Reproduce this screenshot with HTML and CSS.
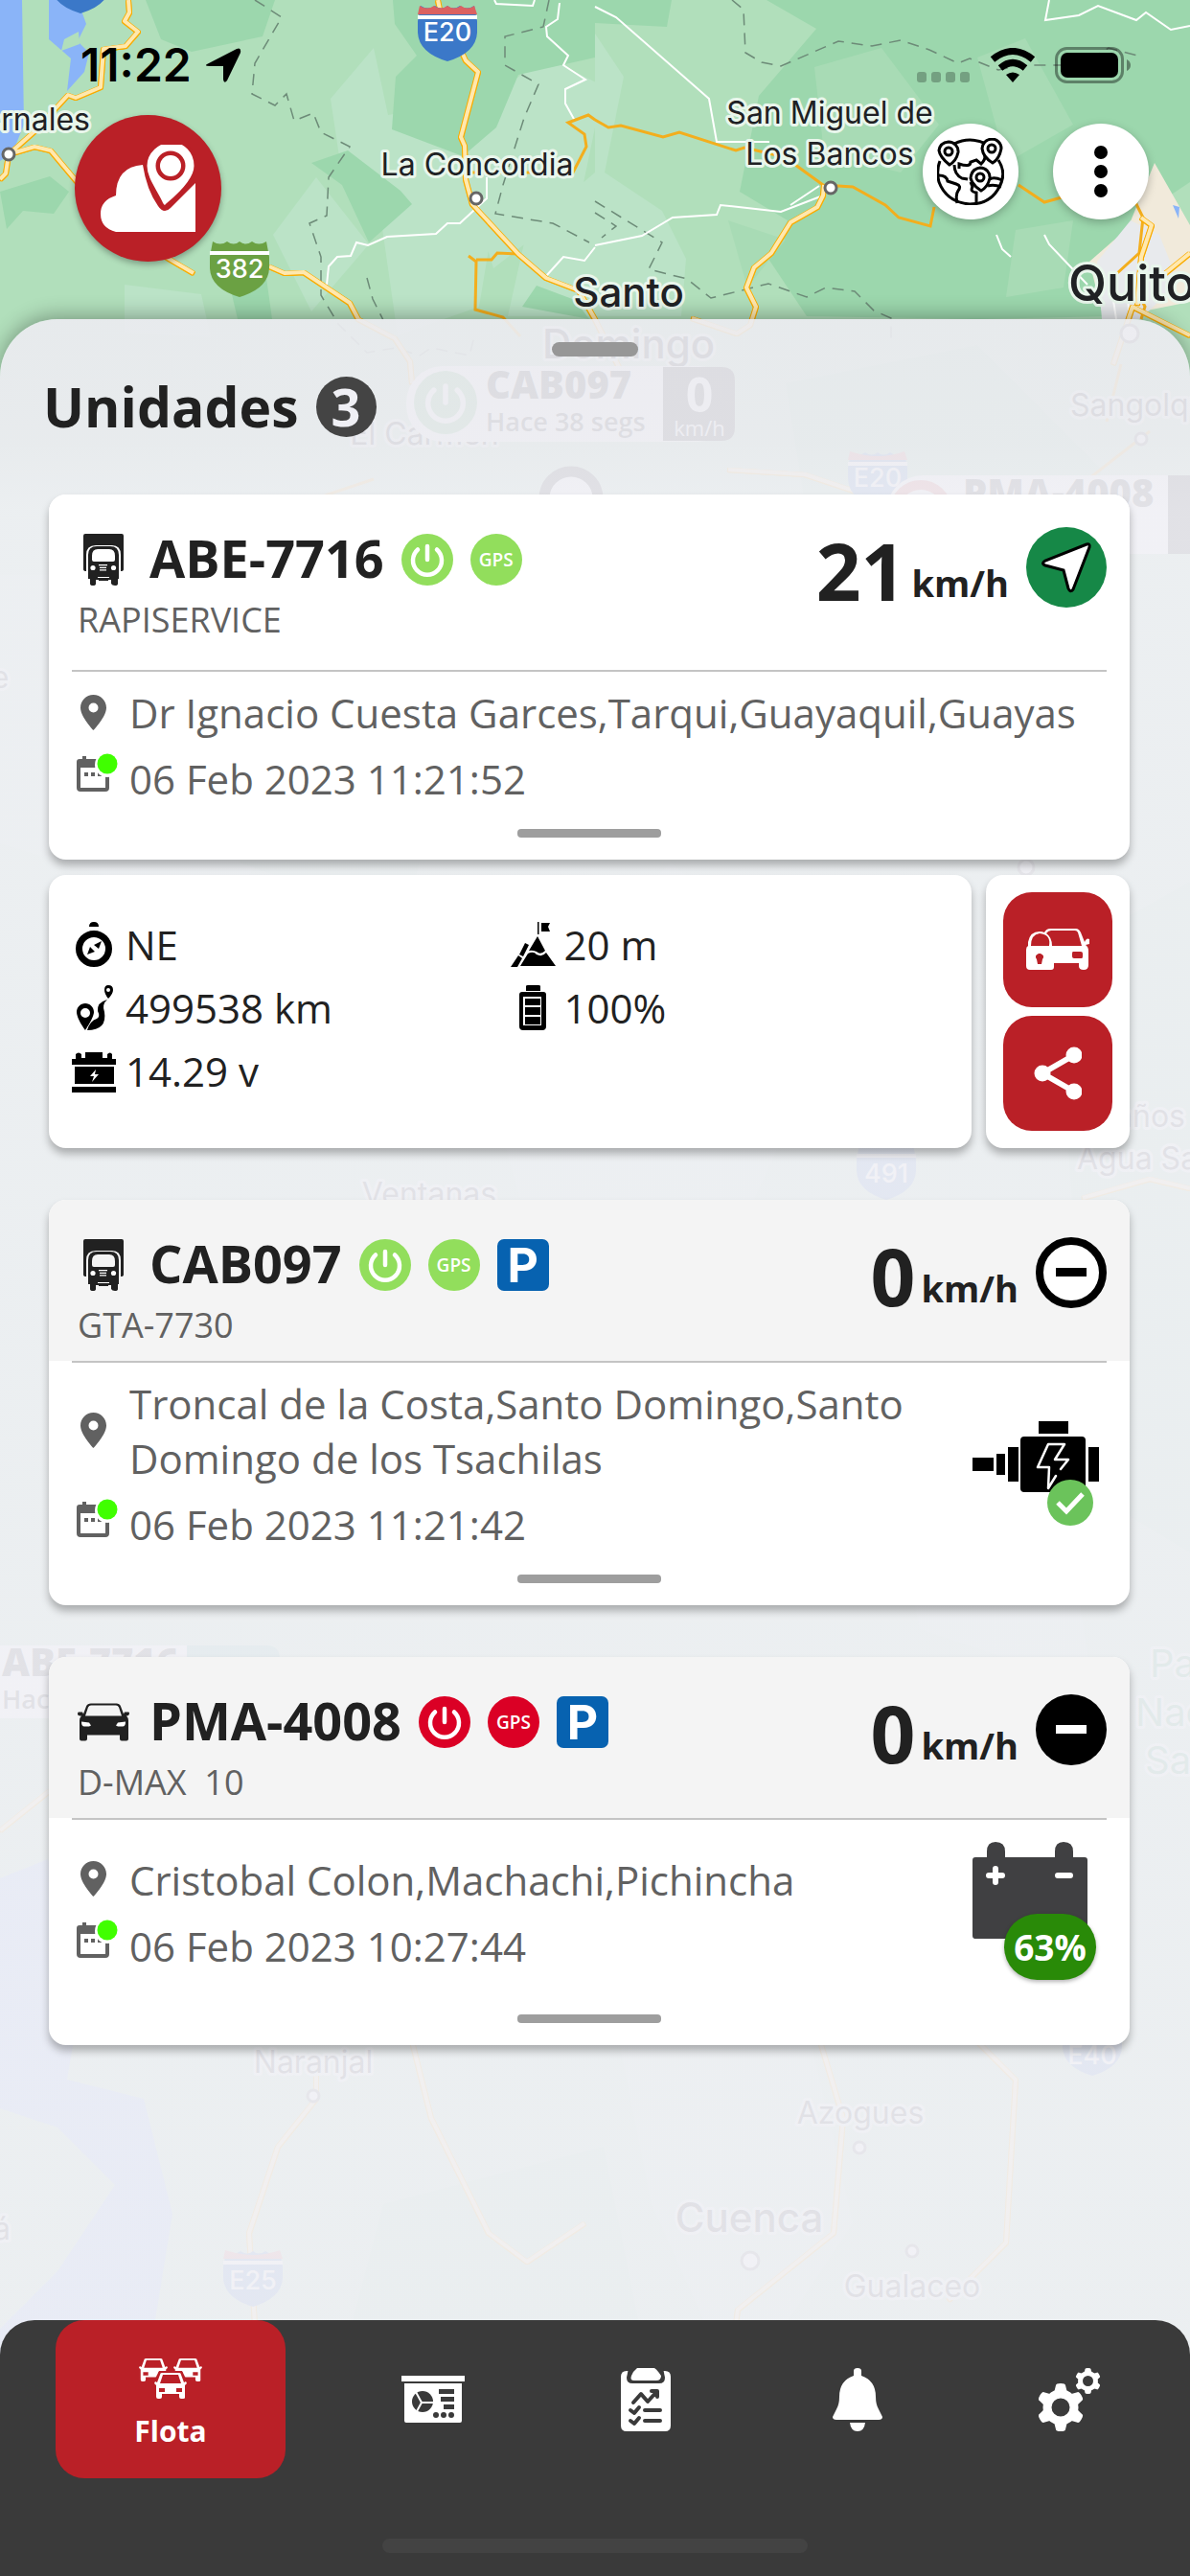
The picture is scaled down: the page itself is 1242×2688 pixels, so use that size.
FILE: index.html
```html
<!DOCTYPE html>
<html lang="es">
<head>
    <meta charset="UTF-8">
    <meta name="viewport" content="width=device-width, initial-scale=1">
    <title>Unidades</title>
    <link rel="stylesheet" href="styles.css">
</head>
<body>
    <!-- shared icons -->
    <svg class="icon-defs" aria-hidden="true">
        <symbol id="i-truck" viewBox="0 0 42 54">
            <path fill="currentColor" d="M2 0h38q2 0 2 2v35q0 2-3 2V22q0-10-9-10H13q-10 0-10 10v17q-3 0-3-2V2q0-2 2-2z"/>
            <path fill="currentColor" fill-rule="evenodd" d="M14 13h14q9 0 9 9v25h-1v5q0 2-3 2t-4-2v-4h-3v1H16v-1h-3v4q0 2-3 2t-3-2v-5H5V22q0-9 9-9zm1 3q-6 0-6 7v4q0 2 2 2h20q2 0 2-2v-4q0-7-6-7z"/>
            <g fill="#fff"><circle cx="10" cy="35.500" r="2.600"/><circle cx="31.500" cy="35.500" r="2.600"/><path d="M16 32h9v1.300h-9zM17 34.700h7v1.300h-7zM17 37.200h7v1.300h-7zM15 45h12v1H15z"/></g>
        </symbol>
        <symbol id="i-car" viewBox="0 0 54 39">
            <path fill="currentColor" fill-rule="evenodd" d="M14 0h27q3 0 4 3l3 8 1-2h4q1 0 1 1 0 3-3 3 2 2 2 5v19q0 2-2 2h-5q-2 0-2-2v-4H10v4q0 2-2 2H4q-2 0-2-2V18q0-3 2-5-4 0-4-2 0-2 1-2h4l1 2 3-8q1-3 5-3zm0 2q-2 0-3 2L8 13h38l-3-9q-1-2-3-2z"/>
            <path fill="#fff" d="M4 19l8 1 2 3-2 1H7q-3 0-3-5zm46 0l-8 1-2 3 2 1h5q3 0 3-5z"/>
        </symbol>
        <symbol id="i-power" viewBox="0 0 54 54">
            <circle cx="27" cy="27" r="27" fill="currentColor"/>
            <path d="M27 13v14M17 16.500a15 15 0 1 0 20 0" fill="none" stroke="#fff" stroke-width="4.500" stroke-linecap="round"/>
        </symbol>
        <symbol id="i-pin" viewBox="0 0 48 54">
            <path fill="currentColor" fill-rule="evenodd" d="M22.500 8C15 8 9 14 9 21.500 9 31 22.500 45 22.500 45S36 31 36 21.500C36 14 30 8 22.500 8zm0 8.500a5 5 0 1 1 0 10 5 5 0 0 1 0-10z"/>
        </symbol>
        <symbol id="i-date" viewBox="0 0 48 54">
            <path fill="currentColor" fill-rule="evenodd" d="M8 6h3V3h4v3h20q4 0 4 4v26q0 4-4 4H9q-4 0-4-4V9q0-3 3-3zm1 9v21h26V15z"/>
            <path fill="currentColor" d="M13 20h4v4h-4zM20 20h4v4h-4zM27 20h4v4h-4z"/>
            <circle cx="37" cy="12" r="13" fill="#fff"/><circle cx="37" cy="11" r="10.500" fill="#40ff00"/>
        </symbol>
        <symbol id="i-minicar" viewBox="0 0 34 27">
            <path fill="#fff" fill-rule="evenodd" d="M8 0h18q2 0 2 2l3 8 2-1 1 2-2 2v13q0 1-2 1h-2q-2 0-2-2v-3H8v3q0 2-2 2H4q-2 0-2-2V13l-2-2 1-2 2 1 3-8q0-2 2-2zm1 2L6 11h22l-3-9zM5 16v4h6v-4zm18 0v4h6v-4z"/>
        </symbol>
        <symbol id="i-shield" viewBox="0 0 64 62">
            <path fill="currentColor" d="M4 4q8 5 15 0 7 5 13 0 6 5 13 0 7 5 15 0l3 16v12Q62 53 32 62 2 53 1 32V20z"/>
            <path fill="#fff" d="M1 14h62v4H1z"/>
        </symbol>
    </svg>

    <svg class="map" viewBox="0 0 1242 2688" preserveAspectRatio="xMidYMin slice" aria-hidden="true">
        <rect width="1242" height="2688" fill="#b1dfbb"/>
        <!-- land -->
        <g fill="#bbe3c7">
            <path d="M345 103l45-53 15 70 55-10 60 90-20 120-85 30-20-140-40-40zM285 245l45-60 55 70-60 70zM130 297l80 10 10 45-90-5zM621 35l30 45-20 100 60 40 25 50-5 60H530l20-90 71-60zM990 20l40 15-15 60zM470 130l100-70 60 30-25 120-90 70z"/>
            <path d="M0 600h300l90 150-160 200L0 880zM500 1100l200-200 180 150-120 260H560zM640 2100l190-40 60 260-120 180-90-200zM900 1400l180-40 60 400-180-60z"/>
        </g>
        <g fill="#9cd7ad">
            <path d="M152 0h135l-13 38-74 16-32-13zM410 0h211v60l-80 18-23 55-35 30-74-28 4-55 22-22-23-33zM325 170l38-13 55 42 12 14-45 40-28-60zM0 200l52-16 20 16-16 23-32-3-17 19zM621 0h80l-5 28-75-4zM800 0h442v190l-60 40-20 100-140 3-180-3-40-60 20-40-50-30 20-100 60-70zM238 290h40l6 43h-36zM545 320l15-22 40 15 15 20z"/>
            <path d="M820 400l200-40 130 130-90 220-200-60zM1100 1000l142-80v700l-100-60zM300 700l180 60-60 200-170-60zM400 2300l230-60 60 300-240 148-110-160z"/>
        </g>
        <path d="M850 70l70-20 60 80-40 50-80-20zM1020 60l50-20 50 90-70 40zM1060 240l60-10-10 70-60 10zM760 230l60 20-40 50z" fill="#a8dbb5"/>
        <path d="M1205 170l37 65v80l-90 18-15-60 40-35z" fill="#f1eadb"/>
        <path d="M1180 230l30 15 20 50-40 38h-40l-5-60z" fill="#e8eaed"/>
        <path d="M0 0h23l2 130-12 30-13 8zM51 0h30l9 25-9 18 12 12-5 20-18 20 4-34-23-20zM1224 214l7 2-1 12zM0 1960l50-20 40 110-20 120 80 20 30 120-60 370H0z" fill="#8ab4f8"/>
        <path d="M82 33l-15 8-3 12 19-7zM0 2200l60 20 60 60-60 90-60 60z" fill="#b1dfbb"/>
        <!-- boundaries -->
        <g class="border">
            <path d="M266 0l28 18-28 48-3 32 24 12 12-12 8 28 20-8 8 20 30 15-22 32-2 40-18 8 12 35v40l18 30 30 30 30-5 25 8 12-8 40 8 5-20M383 290l6 22 11 22M573 0l-6 28-40 10v30l35 20-15 35-22 70-8 30 60 10 38 20M621 222l22 14-15 12M764 0l12 10 2 45 17 10 20 4 60-26 35 5 30-6 30 10 30 14 12-5 30 12 25-5h60l30-18 30 8M621 210l70 43-14 28 40 10 25 20 60-15 40 14 20-10 30 4 20 20 18 8v22"/>
        </g>
        <!-- minor roads -->
        <g class="lane">
            <path d="M621 7l22 11 97 85 8 45 55 0M621 256l49-10 32-19 46-3 4-10 63 7 44-17M341 297l2-19 9-10 14-1 6-14 12 3 20-9 51-3 12-11h13l28-26v-22M570 288l18-20 22 4 11-14M516 0l2 4 38 2 2-6M584 3l-2 17-12 8 1 10 22 20-5 10 23 15-21 10v15l10 18M1040 245l6 15 9 8M1090 245l5 10 40 42M1095 0l-4 21 35-5 20-10 40 15 10-8 26 18 20-4M825 214l30-20M1160 300l5 33M1175 290l4 43"/>
        </g>
        <g class="road-thin">
            <path d="M621 125l14 8 13-2 44 12 17-5 59 19 9-3 42 10 40 29 31 2 34 19 14 13 33 9 4-20M1063 193l27 18 18-5M1185 211l8 16-4 37-24 22M621 125l-7-5-21 8 17 12 2 13-14 27H487M489 267l8 6-1 50 29 8 18 20M497 271l16 0 6-7 22 1M1185 300l10 20-4 13M390 500l-60 20-40 60M1170 380l-15 60M1110 520l90-70"/>
        </g>
        <g class="road">
            <path d="M134 0l1 13-5 9 14 11-13 15-23 3-3 40-26 11-8-3-35 38-27 24 27-8 17 4 26 31 60 60 63 37M9 161l-3 20-6 6M281 278l16 7 20-1 48 32 9 17 38 20 16 24 2 23M457 0l2 10M481 52l5 11 13 12-18 68 4 9 1 35 7 26 48 52 29 25 34 13 17 30 30 60M860 193l-1 11-6 12-28 16-20 32-18 15-8 21 10 20-6 19-14 9-47-16M1191 227l11 8-11 33-4 50M1242 264l-27 22M1242 350l-60-30-20 60M760 490l80 5 60 20M330 2160v30l-40 50-30 90 10 160M430 2130l20 80 60 120 40 30 60-40M850 2110l30 100-10 120-100 80-20 150M1020 2130l40 40-10 170-60 60M120 1850l-70 20-50 40M1130 1250l70-20 42 10"/>
        </g>
        <g class="town">
            <circle cx="9" cy="161" r="6"/><circle cx="497" cy="207" r="6"/><circle cx="867" cy="196" r="6"/><circle cx="1179" cy="348" r="9"/><circle cx="1191" cy="458" r="6"/><circle cx="327" cy="2187" r="6"/><circle cx="897" cy="2241" r="6"/><circle cx="783" cy="2359" r="9"/><circle cx="952" cy="2349" r="6"/><circle cx="1071" cy="905" r="8"/>
        </g>
        <!-- place names -->
        <g class="place">
            <text x="94" y="136" text-anchor="end">Pedernales</text>
            <text x="498" y="183">La Concordia</text>
            <text x="866" y="129">San Miguel de</text>
            <text x="866" y="172">Los Bancos</text>
            <text x="443" y="464">El Carmen</text>
            <text x="1117" y="434" text-anchor="start">Sangolquí</text>
            <text x="448" y="1257">Ventanas</text>
            <text x="1237" y="1176" text-anchor="end">Baños</text>
            <text x="1124" y="1220" text-anchor="start">Agua Santa</text>
            <text x="327" y="2163">Naranjal</text>
            <text x="898" y="2216">Azogues</text>
            <text x="952" y="2397">Gualaceo</text>
            <text x="0" y="718">e</text>
            <text x="2" y="2337">á</text>
        </g>
        <g class="place park">
            <text x="1200" y="1750" text-anchor="start">Parque</text>
            <text x="1185" y="1801" text-anchor="start">Nacional</text>
            <text x="1195" y="1851" text-anchor="start">Sangay</text>
        </g>
        <g class="place city">
            <text x="656" y="320">Santo</text>
            <text x="656" y="374">Domingo</text>
            <text x="782" y="2329">Cuenca</text>
        </g>
        <text class="place capital" x="1115" y="314">Quito</text>
        <!-- road shields -->
        <g class="shield">
            <use href="#i-shield" x="52" y="-48" width="64" height="62" color="#3b78c8"/>
            <use href="#i-shield" x="435" y="2" width="64" height="62" color="#3b78c8"/>
            <path d="M438 6q8 5 15 0 7 5 14 0 7 5 14 0 7 5 14 0l3 9h-62z" fill="#db6161"/>
            <text x="467" y="43">E20</text>
            <use href="#i-shield" x="218" y="248" width="64" height="62" color="#6ba143"/>
            <text x="250" y="290">382</text>
            <use href="#i-shield" x="884" y="468" width="64" height="62" color="#3b78c8"/>
            <path d="M887 471q30 10 57 0l3 9h-62z" fill="#db6161"/>
            <text x="916" y="508">E20</text>
            <use href="#i-shield" x="893" y="1190" width="64" height="62" color="#3b78c8"/>
            <text x="925" y="1234">491</text>
            <use href="#i-shield" x="232" y="2345" width="64" height="62" color="#3b78c8"/>
            <path d="M235 2348q30 10 57 0l3 9h-62z" fill="#db6161"/>
            <text x="264" y="2389">E25</text>
            <use href="#i-shield" x="1108" y="2104" width="64" height="62" color="#3b78c8"/>
            <text x="1140" y="2154">E40</text>
        </g>
        <!-- vehicle markers -->
        <g class="marker">
            <rect x="424" y="382" width="343" height="79" rx="38" fill="#fff"/>
            <path d="M692 383h61q14 0 14 14v49q0 14-14 14h-61z" fill="#222"/>
            <use href="#i-power" x="432" y="387" width="66" height="66" color="#5fb56d"/>
            <text class="plate" x="507" y="416">CAB097</text>
            <text class="ago" x="507" y="450">Hace 38 segs</text>
            <text class="kmh" x="730" y="430">0</text>
            <text class="unit" x="730" y="455">km/h</text>
            <circle cx="596" cy="520" r="28" fill="#fff" stroke="#222" stroke-width="11"/>
            <rect x="925" y="496" width="330" height="82" rx="38" fill="#fff"/>
            <circle cx="961" cy="534" r="28" fill="#fff" stroke="#dd4b4b" stroke-width="10"/>
            <text class="plate" x="1005" y="529">PMA-4008</text>
            <path fill="#222" d="M1219 496h23v82h-23z"/>
            <path fill="#fff" d="M0 1717h200v76H0z"/>
            <path fill="#5fb5a0" d="M195 1717h83q14 0 14 14v62h-97z"/>
            <text class="plate" x="2" y="1749">ABE-7716</text>
            <text class="ago" x="2" y="1783">Hace 28 segs</text>
        </g>
    </svg>

    <div class="screen">
        <div class="status-bar">
            <div class="status-left">
                <span class="time">11:22</span>
                <svg width="38" height="38" viewBox="0 0 38 38" aria-hidden="true"><path d="M2 18L33 2q5-2 4 4L23 35q-3 4-4-1V20H5q-6 0-3-2z"/></svg>
            </div>
            <div class="status-right">
                <svg class="cell" width="56" height="11" viewBox="0 0 56 11" aria-hidden="true"><g fill="#000" opacity=".25"><rect width="10" height="11" rx="3"/><rect x="15" width="10" height="11" rx="3"/><rect x="30" width="10" height="11" rx="3"/><rect x="45" width="10" height="11" rx="3"/></g></svg>
                <svg width="48" height="36" viewBox="0 0 48 36" aria-hidden="true"><g fill="none" stroke="#000" stroke-width="7"><path d="M3 12q21-17 42 0"/><path d="M11 21q13-11 26 0"/></g><path d="M24 36l-7-8q7-5 14 0z"/></svg>
                <svg width="80" height="38" viewBox="0 0 80 38" aria-hidden="true"><rect x="1.500" y="1.500" width="69" height="35" rx="11" fill="none" stroke="#000" stroke-opacity=".4" stroke-width="3"/><rect x="6" y="6" width="60" height="26" rx="7"/><path d="M75 13q4 2 4 6t-4 6z" fill-opacity=".4"/></svg>
            </div>
        </div>

        <header class="toolbar">
            <button class="logo" aria-label="Inicio">
                <svg width="100" height="92" viewBox="0 0 100 92"><path fill="#fff" d="M16 91q-16-4-16-19 0-14 16-19 0-30 28-32 4 26 16 43 6 9 13 2l26-26v51z"/><path fill="#fff" fill-rule="evenodd" stroke="#ba2027" stroke-width="3" d="M74-4c14 0 25 11 25 26 0 17-23 35-30 41q-3 3-5-1C58 48 47 36 47 22 47 8 60-4 74-4zm-1 12a14 14 0 1 0 0 28 14 14 0 0 0 0-28z"/><circle cx="73" cy="22" r="11" fill="#fff"/></svg>
            </button>
            <button class="round map-type" aria-label="Rutas">
                <svg width="70" height="70" viewBox="0 0 70 70" fill="none" stroke="#000" stroke-width="3"><path d="M18 6q16-8 33 0M64 23q9 14 1 28-9 18-31 18Q10 67 2 46-1 34 3 24"/><path d="M2 39q8 0 9 6l9 3q6 2 2 7-3 4-1 13M68 44q-9-4-13-1M67 51q-8-3-14-1M41 68V57q-7-1-4-6l-2-5M18 28q0 10 8 14l6 1M23 32v-5q12 4 12-2l6-2 5 4q6-6 3-11"/><path fill="#fff" d="M12 4a10 10 0 0 1 10 11q-2 9-9 13Q3 20 2 13 3 5 12 4zM57 1a10 10 0 0 1 10 10q-2 11-9 15-10-6-11-15Q48 2 57 1zM45 31a10 10 0 0 1 10 11q-2 9-9 13-9-6-11-13 1-10 10-11z"/><circle cx="12" cy="14" r="4"/><circle cx="57" cy="11" r="4"/><circle cx="45" cy="41" r="4"/></svg>
            </button>
            <button class="round menu" aria-label="Menú">
                <svg width="14" height="54" viewBox="0 0 14 54"><circle cx="7" cy="7" r="7"/><circle cx="7" cy="27" r="7"/><circle cx="7" cy="47" r="7"/></svg>
            </button>
        </header>

        <main class="sheet">
            <button class="sheet-handle" aria-label="Ocultar lista"></button>
            <div class="sheet-title">
                <h1>Unidades</h1>
                <span class="count">3</span>
            </div>

            <div class="units">
                <section class="unit-group">
                    <article class="card">
                        <div class="card-head open">
                            <div class="vehicle">
                                <div class="vehicle-row">
                                    <svg class="kind"><use href="#i-truck"/></svg>
                                    <h2>ABE-7716</h2>
                                    <svg class="state on"><use href="#i-power"/></svg>
                                    <span class="state gps on">GPS</span>
                                </div>
                                <p class="alias">RAPISERVICE</p>
                            </div>
                            <div class="speed">
                                <p><b>21</b><span>km/h</span></p>
                                <svg width="84" height="84" viewBox="0 0 84 84"><circle cx="42" cy="42" r="42" fill="#168847"/><path d="M63 18q4-1 3 3L49 65q-3 4-5-1l-5-19-19-5q-5-2 0-5z" fill="#fff" stroke="#000" stroke-width="3"/></svg>
                            </div>
                        </div>
                        <div class="card-body">
                            <div class="info">
                                <p><svg><use href="#i-pin"/></svg><span>Dr Ignacio Cuesta Garces,Tarqui,Guayaquil,Guayas</span></p>
                                <p><svg><use href="#i-date"/></svg><span>06 Feb 2023 11:21:52</span></p>
                            </div>
                        </div>
                        <button class="card-handle" aria-label="Ver detalle"></button>
                    </article>

                    <div class="details">
                        <ul class="card readings">
                            <li><svg viewBox="0 0 48 48"><path d="M18 5q0-5 5-5t5 5z"/><circle cx="23" cy="28" r="15.500" fill="none" stroke="#000" stroke-width="7"/><path d="M31 20l-3 8-5-4zM16 34l3-8 5 5z"/></svg>NE</li>
                            <li><svg viewBox="0 0 48 48"><path d="M28 0h1.500v13H28zM32 1h9l-2 4 2 5h-9zM28 15l8 15q-5 5-9 1-5-2-8-1zM18 33q6-3 9 1 6 3 10-2l10 14H10zM15 22l4 2-6 12-4-2zM8 35l4 3-5 9H0z"/></svg>20 m</li>
                            <li><svg viewBox="0 0 48 48"><path fill-rule="evenodd" d="M14 19c5 0 9 4 9 9 0 6-9 19-9 19S5 35 5 28c0-5 4-9 9-9zm0 5a5 5 0 1 0 0 10 5 5 0 0 0 0-10zM38 0q5 0 5 5 0 4-5 9-4-5-4-9 0-5 4-5zm0 3a2 2 0 1 0 0 4 2 2 0 0 0 0-4z"/><path d="M37 15q-6 5-3 13 3 19-18 19 3-10 10-12 4-2 1-8-1-9 10-12z"/></svg>499538 km</li>
                            <li><svg viewBox="0 0 48 48"><path d="M16 1q0-1 2-1h11q2 0 2 1v5H16z"/><path fill-rule="evenodd" d="M12 7h22q3 0 3 3v33q0 4-4 4H13q-4 0-4-4V10q0-3 3-3zm1 5v30h19V12z"/><path d="M15 14h16v7H15zM15 23h16v8H15zM15 33h16v8H15z"/></svg>100%</li>
                            <li><svg viewBox="0 0 48 48"><path d="M0 11h4V6q3-3 6 0v4h4V4h18v6h5V6q3-3 5 0v5h4v6H0zM0 40h46v6H0z"/><path fill-rule="evenodd" d="M3 19h41v18H3zm22 3l-6 7h4l-2 6 7-8h-4z"/></svg>14.29 v</li>
                        </ul>
                        <div class="card actions">
                            <button aria-label="Bloquear vehículo"><svg width="66" height="44" viewBox="0 0 66 44"><path fill="#fff" fill-rule="evenodd" d="M2 18V14Q4 3 14 3q3 0 5 1 2-4 6-4h27q3 0 5 4l4 10q2-5 5-3v5l-4 1q3 2 3 6v15q0 5-5 5t-5-4v-3H29v4q0 3-3 3H4q-4 0-4-4V22q0-3 2-4zm3 0h19q2-12-10-13Q5 6 5 18zm16-13q6 4 6 13h31L54 4q-1-2-3-2H26q-3 0-5 3zM13 26q-5 2-2 6l1 5h4l1-5q3-4-2-6zm36-2q-1 0-1 2v3q0 2 2 2h8q1 0 1-2v-3q0-2-2-2z"/></svg></button>
                            <button aria-label="Compartir"><svg width="50" height="56" viewBox="0 0 50 56"><path d="M42 9L9 28l33 19" fill="none" stroke="#fff" stroke-width="6"/><circle cx="42" cy="9" r="8.500" fill="#fff"/><circle cx="9" cy="28" r="8.500" fill="#fff"/><circle cx="42" cy="47" r="8.500" fill="#fff"/></svg></button>
                        </div>
                    </div>
                </section>

                <article class="card">
                    <div class="card-head">
                        <div class="vehicle">
                            <div class="vehicle-row">
                                <svg class="kind"><use href="#i-truck"/></svg>
                                <h2>CAB097</h2>
                                <svg class="state on"><use href="#i-power"/></svg>
                                <span class="state gps on">GPS</span>
                                <span class="state parking">P</span>
                            </div>
                            <p class="alias">GTA-7730</p>
                        </div>
                        <div class="speed">
                            <p><b>0</b><span>km/h</span></p>
                            <svg width="74" height="74" viewBox="0 0 74 74"><circle cx="37" cy="37" r="33" fill="#fff" stroke="#000" stroke-width="8"/><path d="M21 32h32v9H21z"/></svg>
                        </div>
                    </div>
                    <div class="card-body">
                        <div class="info">
                            <p><svg><use href="#i-pin"/></svg><span>Troncal de la Costa,Santo Domingo,Santo Domingo de los Tsachilas</span></p>
                            <p><svg><use href="#i-date"/></svg><span>06 Feb 2023 11:21:42</span></p>
                        </div>
                        <svg class="sensor" width="132" height="130" viewBox="0 -20 132 130"><path d="M69 0h31v13H69zM0 38h22v14H0zM25 34h9v22h-9zM37 27h11v36H37zM121 27h11v36h-11z"/><rect x="50" y="16" width="68" height="58" rx="4"/><path d="M92 50l8-10H86l10-16H79L68 48h12l-1 22 8-13" fill="none" stroke="#fff" stroke-width="2.500" stroke-linejoin="round" stroke-linecap="round"/><circle cx="102" cy="85" r="24" fill="#6bc35b"/><path d="M89 85l9 9 17-18" fill="none" stroke="#fff" stroke-width="5"/></svg>
                    </div>
                    <button class="card-handle" aria-label="Ver detalle"></button>
                </article>

                <article class="card">
                    <div class="card-head">
                        <div class="vehicle">
                            <div class="vehicle-row">
                                <svg class="kind"><use href="#i-car"/></svg>
                                <h2>PMA-4008</h2>
                                <svg class="state off"><use href="#i-power"/></svg>
                                <span class="state gps off">GPS</span>
                                <span class="state parking">P</span>
                            </div>
                            <p class="alias">D-MAX&nbsp; 10</p>
                        </div>
                        <div class="speed">
                            <p><b>0</b><span>km/h</span></p>
                            <svg width="74" height="74" viewBox="0 0 74 74"><circle cx="37" cy="37" r="37"/><path fill="#fff" d="M21 32h32v9H21z"/></svg>
                        </div>
                    </div>
                    <div class="card-body">
                        <div class="info">
                            <p><svg><use href="#i-pin"/></svg><span>Cristobal Colon,Machachi,Pichincha</span></p>
                            <p><svg><use href="#i-date"/></svg><span>06 Feb 2023 10:27:44</span></p>
                        </div>
                        <div class="battery">
                            <svg width="120" height="102" viewBox="0 0 120 102"><path fill="#404042" d="M15 16V10q0-10 9-10 10 0 10 10v6h52V10q0-10 9-10 10 0 10 10v6h12q3 0 3 3v79q0 3-3 3H3q-3 0-3-3V19q0-3 3-3z"/><path d="M24 28v14M17 35h14M89 35h13" fill="none" stroke="#fff" stroke-width="6" stroke-linecap="round"/></svg>
                            <span class="charge">63%</span>
                        </div>
                    </div>
                    <button class="card-handle" aria-label="Ver detalle"></button>
                </article>
            </div>
        </main>

        <nav class="tabs">
            <button class="tab active">
                <svg width="66" height="42" viewBox="0 0 66 42"><use href="#i-minicar" width="30" height="24"/><use href="#i-minicar" x="36" width="30" height="24"/><path d="M21 13h24l5 10v19H16V23z" fill="#ba2027"/><use href="#i-minicar" x="16" y="15" width="34" height="27"/></svg>
                Flota
            </button>
            <button class="tab" aria-label="Reportes">
                <svg width="66" height="50" viewBox="0 0 66 50"><path fill="#fff" fill-rule="evenodd" d="M0 0h66v6H0zM3 8h60v39q0 2-2 2H5q-2 0-2-2zm36 6v5h16v-5zm2 8v5h14v-5zm3 8v5h11v-5z"/><circle cx="22" cy="27" r="11" fill="#3a3a3a"/><path d="M34 28H21l-6-11M21 28l-6 11" fill="none" stroke="#fff" stroke-width="2"/><g fill="#3a3a3a"><circle cx="36" cy="41" r="3"/><circle cx="44" cy="41" r="3"/><circle cx="52" cy="41" r="3"/></g></svg>
            </button>
            <button class="tab" aria-label="Tareas">
                <svg width="52" height="66" viewBox="0 0 52 66"><path fill="#fff" d="M6 3h40q6 0 6 6v51q0 6-6 6H6q-6 0-6-6V9q0-6 6-6z"/><path fill="#3a3a3a" d="M8 0h36l2 10q0 6-6 6H12q-6 0-6-6z"/><path fill="#fff" d="M17 0h18q3 2 7 8 0 5-5 5H14q-5 0-3-5 2-5 6-8z"/><path d="M13 36l8-9 7 8 10-11m-6 0h6v6M10 44l4 3 5-6M10 55l4 3 5-6M25 44h16M25 55h16" fill="none" stroke="#3a3a3a" stroke-width="4" stroke-linecap="round" stroke-linejoin="round"/></svg>
            </button>
            <button class="tab" aria-label="Alertas">
                <svg width="52" height="66" viewBox="0 0 52 66"><path fill="#fff" d="M22 3q0-3 4-3t4 3v5q15 5 15 22 0 8 3 13l4 8q0 3-4 3H4q-4 0-4-3l4-8q3-5 3-13Q7 13 22 8zM18 57h16q-1 9-8 9t-8-9z"/></svg>
            </button>
            <button class="tab" aria-label="Ajustes">
                <svg width="66" height="66" viewBox="0 0 66 66">
                    <g fill="#fff"><path id="teeth" d="M18 18q0-2 5-2t5 2l2 8H16zM18 64q0 2 5 2t5-2l2-8H16z"/><use href="#teeth" transform="rotate(60 23 41)"/><use href="#teeth" transform="rotate(120 23 41)"/></g>
                    <circle cx="23" cy="41" r="14" fill="none" stroke="#fff" stroke-width="9"/>
                    <g fill="#fff"><path id="teeth-s" d="M48.500 1q0-1 3-1t3 1l1 5h-8zM48.500 26q0 1 3 1t3-1l1-5h-8z"/><use href="#teeth-s" transform="rotate(60 51.500 13.500)"/><use href="#teeth-s" transform="rotate(120 51.500 13.500)"/></g>
                    <circle cx="51.500" cy="13.500" r="8" fill="none" stroke="#fff" stroke-width="5"/>
                </svg>
            </button>
            <span class="home-bar"></span>
        </nav>
    </div>
</body>
</html>
```
FILE: styles.css
```css
* {
    box-sizing: border-box;
}
body {
    margin: 0;
    position: relative;
    background: #b1dfbb;
    color: #212121;
    font-family: "Open Sans", sans-serif;
}
h1, h2, p, ul {
    margin: 0;
    padding: 0;
}
button {
    padding: 0;
    border: none;
    background: none;
    font-family: inherit;
    cursor: pointer;
}
svg {
    display: block;
    flex-shrink: 0;
}
.icon-defs {
    position: absolute;
    width: 0;
    height: 0;
}

/* map */
.map {
    position: absolute;
    top: 0;
    left: 0;
    width: 100%;
    height: 100%;
}
.border path {
    fill: none;
    stroke: #6d8b78;
    stroke-width: 1.5;
    stroke-dasharray: 12 8;
}
.lane path {
    fill: none;
    stroke: #fff;
    stroke-width: 2;
}
.road-thin path {
    fill: none;
    stroke: #f3ae1d;
    stroke-width: 3;
}
.road path {
    fill: none;
    stroke: #ffe8ae;
    stroke-width: 4;
    stroke-linejoin: round;
}
.road {
    filter: drop-shadow(1px 0 0 #f9ab00) drop-shadow(-1px 0 0 #f9ab00) drop-shadow(0 1px 0 #f9ab00);
}
.town circle {
    fill: #fff;
    stroke: #666;
    stroke-width: 3;
}
.place {
    font: 32px Inter, sans-serif;
    fill: #202124;
    stroke: #e9f6ec;
    stroke-width: 6;
    stroke-linejoin: round;
    paint-order: stroke;
    text-anchor: middle;
}
.place.park {
    font-size: 40px;
    fill: #2f9a5c;
}
.place.city {
    font-size: 42px;
    font-weight: 500;
}
.place.capital {
    font-size: 52px;
    font-weight: 500;
    text-anchor: start;
}
.shield text {
    font: 500 27px Inter, sans-serif;
    fill: #fff;
    text-anchor: middle;
}
.marker .plate {
    font: 800 40px "Open Sans", sans-serif;
    fill: #222;
}
.marker .ago {
    font: 600 27px "Open Sans", sans-serif;
    fill: #222;
}
.marker .kmh {
    font: 700 50px "Open Sans", sans-serif;
    fill: #fff;
    text-anchor: middle;
}
.marker .unit {
    font: 22px "Open Sans", sans-serif;
    fill: #fff;
    text-anchor: middle;
}

.screen {
    position: relative;
    display: flex;
    flex-direction: column;
    min-height: 100vh;
}

/* status bar */
.status-bar {
    display: flex;
    justify-content: space-between;
    padding: 44px 61px 28px 84px;
}
.status-left,
.status-right {
    display: flex;
    align-items: center;
    height: 48px;
}
.status-left {
    gap: 14px;
}
.status-right {
    gap: 20px;
}
.cell {
    align-self: flex-end;
    margin-bottom: 6px;
}
.time {
    color: #000;
    font: 600 48px/48px Inter, sans-serif;
}

/* floating buttons over the map */
.toolbar {
    display: flex;
    align-items: flex-start;
    padding: 0 43px 60px 78px;
}
.logo {
    display: flex;
    justify-content: center;
    align-items: center;
    width: 153px;
    height: 153px;
    margin-right: auto;
    border-radius: 50%;
    background: #ba2027;
    box-shadow: 0 3px 6px rgba(0,0,0,0.3);
}
.round {
    display: flex;
    justify-content: center;
    align-items: center;
    width: 100px;
    height: 100px;
    margin-top: 9px;
    border-radius: 50%;
    background: #fff;
    box-shadow: 0 3px 10px rgba(0,0,0,0.25);
}
.menu {
    margin-left: 36px;
}

/* sheet */
.sheet {
    flex: 1;
    padding-bottom: 90px;
    border-radius: 60px 60px 0 0;
    background: linear-gradient(rgba(235,235,240,0.93), rgba(236,236,241,0.93) 130px, rgba(240,240,245,0.93) 200px);
    box-shadow: 0 -4px 20px rgba(0,0,0,0.3);
}
.sheet-handle {
    display: block;
    width: 90px;
    height: 15px;
    margin: 24px auto 21px;
    border-radius: 8px;
    background: #979797;
}
.sheet-title {
    display: flex;
    align-items: center;
    gap: 18px;
    padding-left: 45px;
}
.sheet-title h1 {
    font-size: 57px;
    line-height: 63px;
}
.count {
    width: 63px;
    height: 63px;
    border-radius: 50%;
    background: #444;
    color: #f0f0f5;
    font-size: 54px;
    font-weight: 700;
    line-height: 63px;
    text-align: center;
}
.units {
    display: flex;
    flex-direction: column;
    gap: 54px;
    padding: 60px 63px 0 51px;
}
.unit-group {
    display: flex;
    flex-direction: column;
    gap: 16px;
}

/* unit card */
.card {
    overflow: hidden;
    border-radius: 18px;
    background: #fff;
    box-shadow: 0 6px 9px rgba(0,0,0,0.28);
}
.card-head {
    display: flex;
    justify-content: space-between;
    padding: 34px 24px 13px 30px;
    background: #f4f4f4;
}
.card-head.open {
    padding-bottom: 28px;
    background: #fff;
}
.vehicle {
    padding-top: 7px;
}
.vehicle-row {
    display: flex;
    align-items: flex-start;
    gap: 18px;
    height: 54px;
}
.kind {
    width: 54px;
    height: 54px;
}
h2 {
    padding-left: 3px;
    font-size: 54px;
    line-height: 50px;
}
.state {
    width: 54px;
    height: 54px;
}
.state.on {
    color: #92de5c;
}
.state.off {
    color: #db0025;
}
.gps {
    border-radius: 50%;
    background: currentColor;
    text-align: center;
}
.gps::first-line {
    color: #fff;
    font-size: 19px;
    font-weight: 600;
    line-height: 54px;
}
.parking {
    border-radius: 7px;
    background: #0762b0;
    color: #fff;
    font: 700 50px/54px Inter, sans-serif;
    text-align: center;
}
.alias {
    margin-top: 12px;
    color: #616161;
    font-size: 36px;
    line-height: 48px;
}
.speed {
    display: flex;
    align-items: center;
    gap: 18px;
    height: 84px;
}
.speed p {
    display: flex;
    align-items: flex-end;
    gap: 6px;
    padding-top: 6px;
}
.speed b {
    font-size: 82px;
    line-height: 82px;
}
.speed span {
    font-size: 38px;
    font-weight: 700;
    line-height: 56px;
}
.card-body {
    display: flex;
    justify-content: space-between;
    align-items: center;
    gap: 40px;
    margin: 0 24px;
    padding: 14px 8px 24px 0;
    border-top: 2px solid #c4c4c4;
}
.info {
    flex: 1;
    display: flex;
    flex-direction: column;
    gap: 12px;
    color: #616161;
    font-size: 42px;
    line-height: 57px;
}
.info p {
    display: flex;
    align-items: center;
    gap: 12px;
}
.info svg {
    width: 48px;
    height: 54px;
}
.battery {
    position: relative;
    width: 132px;
    height: 165px;
    padding-top: 9px;
}
.charge {
    position: absolute;
    right: 3px;
    bottom: 12px;
    width: 96px;
    height: 69px;
    border-radius: 35px;
    background: #298a08;
    box-shadow: 0 2px 4px rgba(0,0,0,0.3);
    color: #fff;
    font-size: 37px;
    font-weight: 700;
    line-height: 69px;
    text-align: center;
}
.card-handle {
    display: block;
    width: 150px;
    height: 9px;
    margin: 0 auto 23px;
    border-radius: 4px;
    background: #9e9e9e;
}

/* expanded unit */
.details {
    display: flex;
    gap: 15px;
}
.readings {
    flex: 1;
    display: grid;
    grid-template-columns: 1fr 1fr;
    align-content: start;
    padding: 40px 24px;
    list-style: none;
    font-size: 42px;
    line-height: 66px;
}
.readings li {
    display: flex;
    align-items: center;
    gap: 8px;
}
.readings svg {
    width: 48px;
    height: 48px;
}
.actions {
    display: flex;
    flex-direction: column;
    gap: 9px;
    padding: 18px;
}
.actions button {
    display: flex;
    justify-content: center;
    align-items: center;
    width: 114px;
    height: 120px;
    border-radius: 30px;
    background: #ba2027;
}

/* bottom tabs */
.tabs {
    position: relative;
    display: flex;
    height: 267px;
    margin-top: -36px;
    padding: 0 14px 0 58px;
    border-radius: 36px 36px 0 0;
    background: #3a3a3a;
}
.tab {
    flex: 1;
    display: flex;
    justify-content: center;
    align-items: center;
    height: 165px;
}
.tab.active {
    flex: none;
    flex-direction: column;
    gap: 16px;
    width: 240px;
    margin-right: 43px;
    padding-top: 9px;
    border-radius: 30px;
    background: #ba2027;
    color: #fff;
    font-size: 30px;
    font-weight: 700;
    line-height: 36px;
}
.home-bar {
    position: absolute;
    bottom: 24px;
    left: 50%;
    width: 444px;
    height: 15px;
    margin-left: -222px;
    border-radius: 8px;
    background: #434343;
}
```
